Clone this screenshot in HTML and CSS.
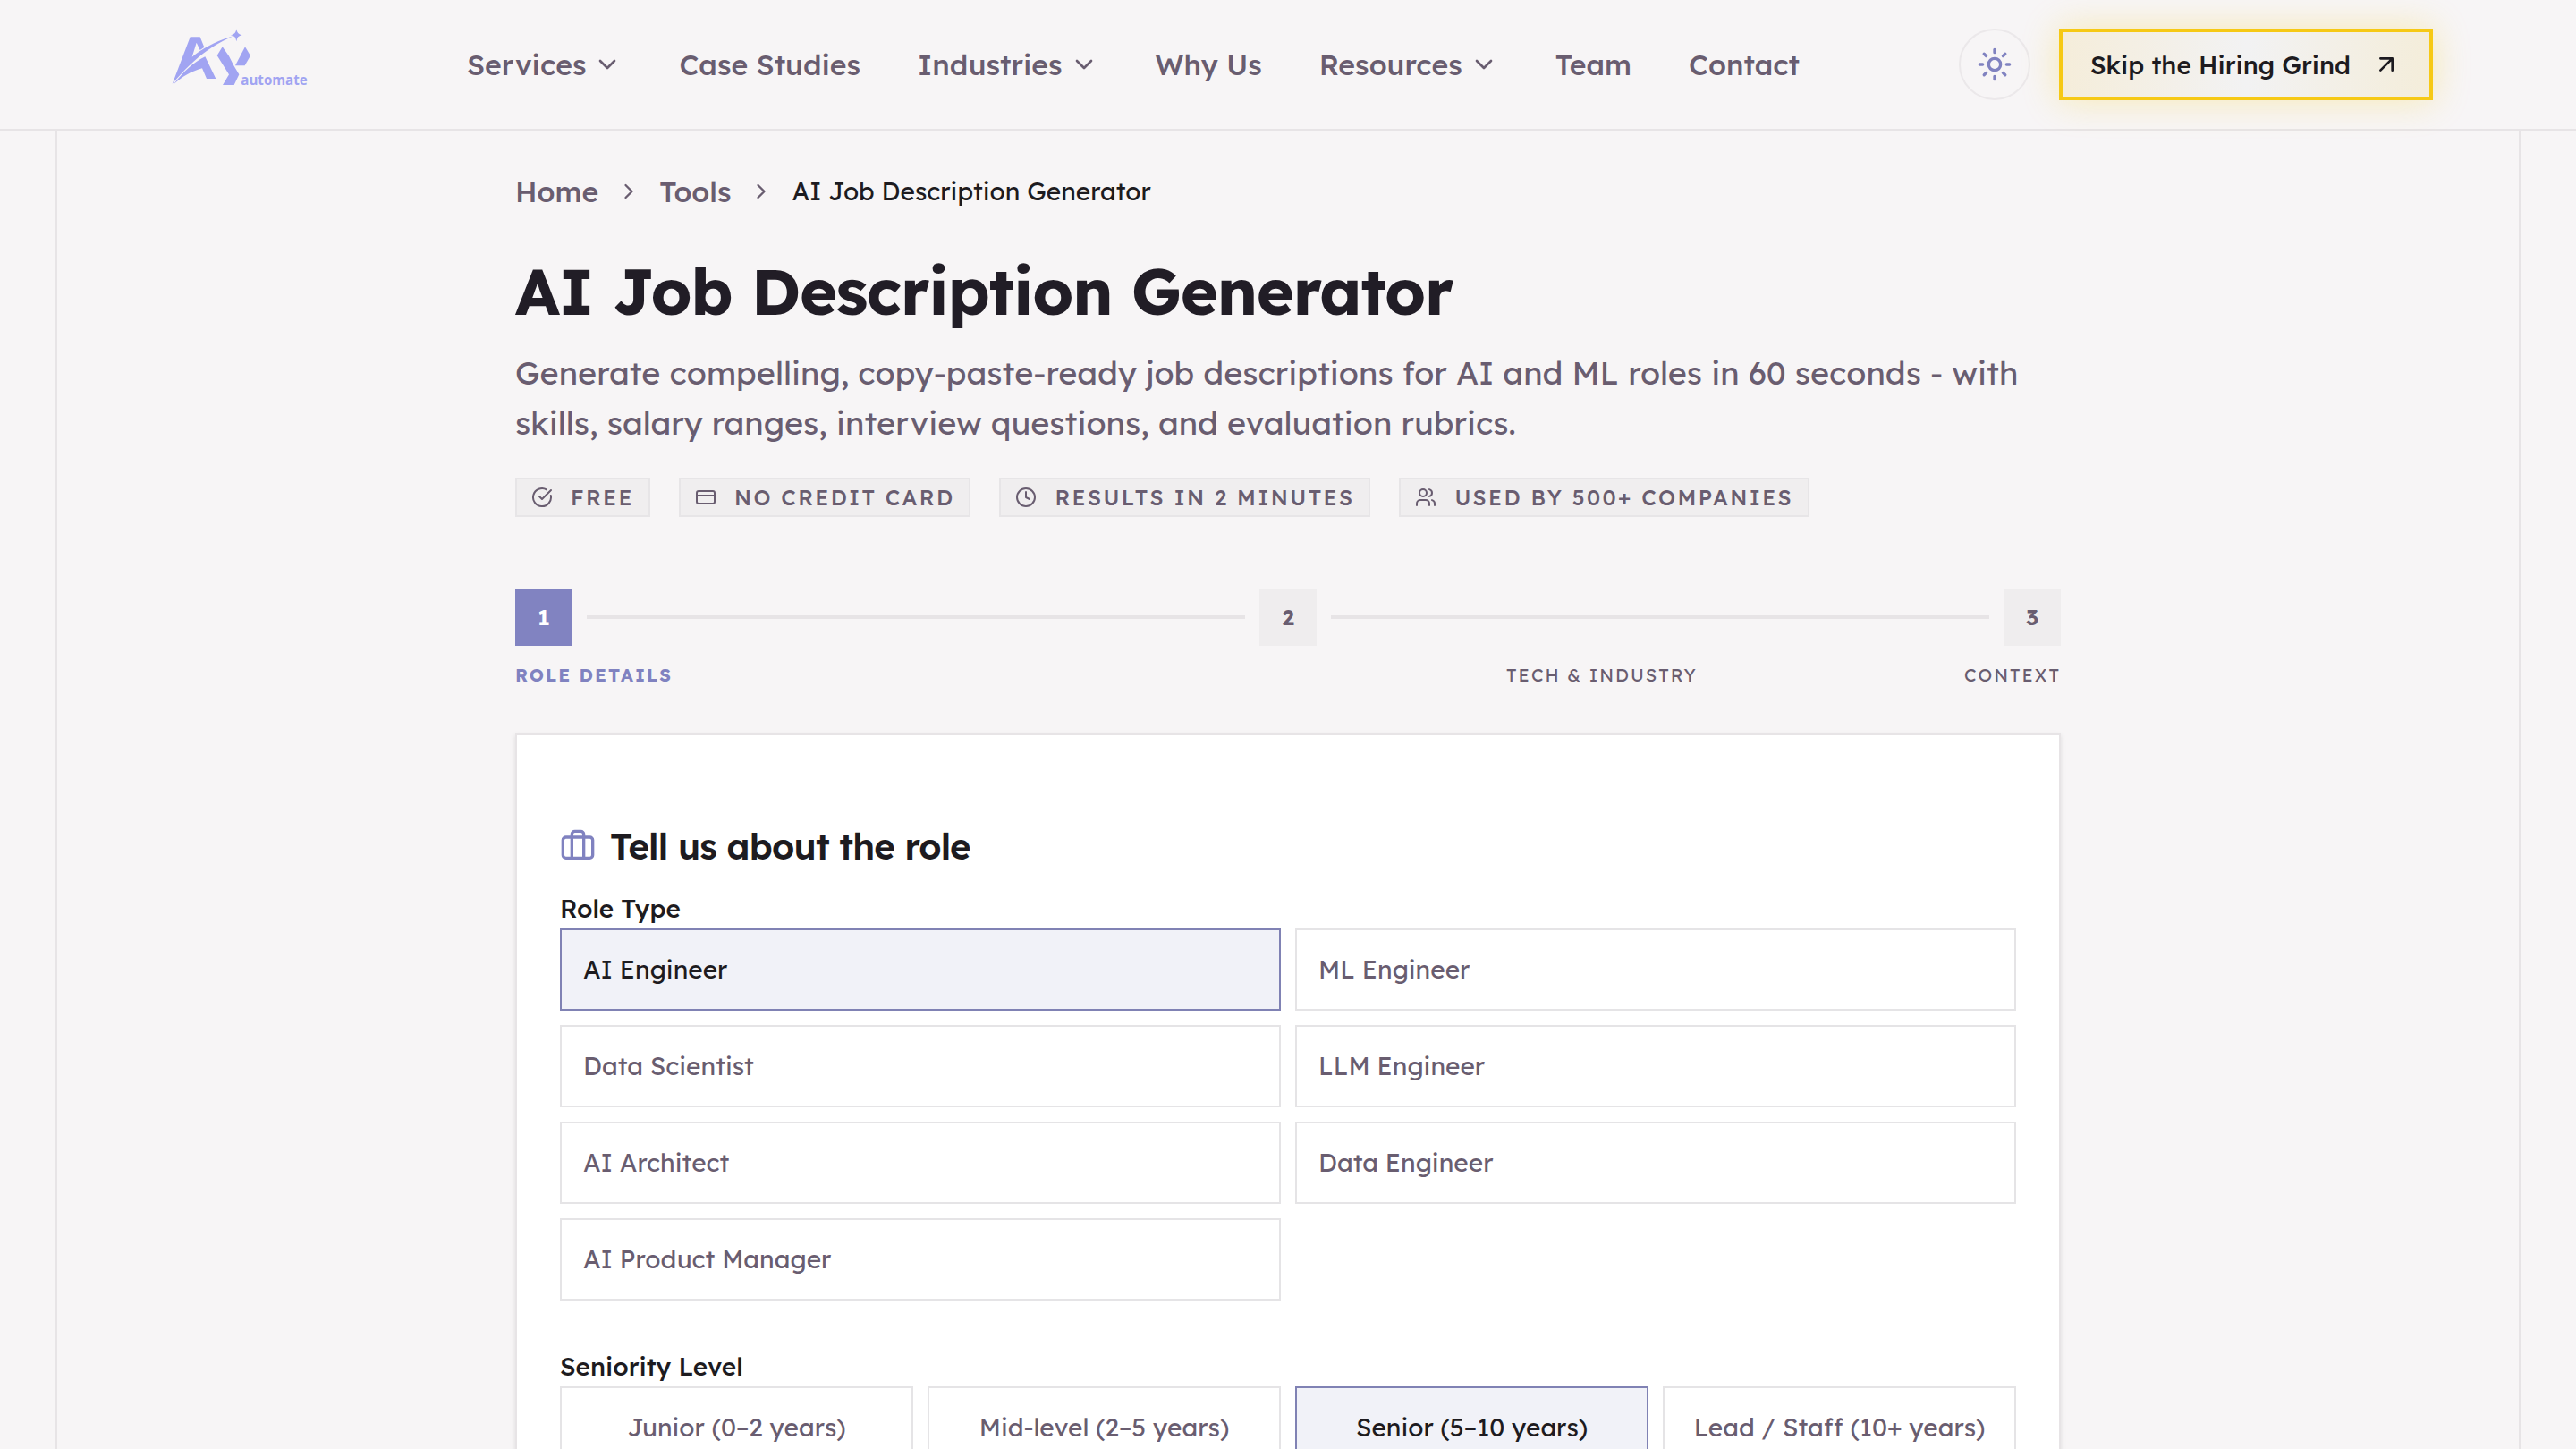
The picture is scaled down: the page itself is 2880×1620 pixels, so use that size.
FILE: index.html
```html
<!DOCTYPE html>
<html lang="en">
<head>
  <meta charset="UTF-8"/>
  <meta name="viewport" content="width=device-width,initial-scale=1.0"/>
  <title>AI Job Description Generator</title>
  <link rel="stylesheet" href="styles.css">
</head>
<body>
  <header class="header">
    <a class="logo" href="#" aria-label="AY automate">
      <svg viewBox="36 36 468 204" width="156" height="68">
        <path d="M98 64H131L145 98L131 108L119 83L104 131C142 101 188 76 243 61C188 84 137 118 95 160C76 178 55 202 38 221Z"/>
        <path d="M42 223C76 180 104 152 148 130L184 204H153L138 169C100 180 70 198 42 223Z"/>
        <path d="M206 97L228 128L244 160L262 190L245 225H207L228 190L188 126Z"/>
        <path d="M282 97L300 127L281 160H249Z"/>
        <path d="M253 37Q255 56 272 58Q255 60 253 79Q251 60 234 58Q251 56 253 37Z"/>
        <text x="268" y="225" textLength="223" lengthAdjust="spacingAndGlyphs">automate</text>
      </svg>
    </a>

    <nav class="nav">
      <a href="#">Services <svg class="icon" viewBox="0 0 24 24"><path d="m6 9 6 6 6-6"/></svg></a>
      <a href="#">Case Studies</a>
      <a href="#">Industries <svg class="icon" viewBox="0 0 24 24"><path d="m6 9 6 6 6-6"/></svg></a>
      <a href="#">Why Us</a>
      <a href="#">Resources <svg class="icon" viewBox="0 0 24 24"><path d="m6 9 6 6 6-6"/></svg></a>
      <a href="#">Team</a>
      <a href="#">Contact</a>
    </nav>

    <div class="actions">
      <button class="theme-btn" aria-label="Toggle theme">
        <svg class="icon" viewBox="0 0 24 24"><circle cx="12" cy="12" r="4"/><path d="M12 2v2M12 20v2M4.93 4.93l1.41 1.41M17.66 17.66l1.41 1.41M2 12h2M20 12h2M6.34 17.66l-1.41 1.41M19.07 4.93l-1.41 1.41"/></svg>
      </button>
      <a class="cta" href="#">
        Skip the Hiring Grind
        <svg class="icon" viewBox="0 0 24 24"><path d="M7 7h10v10M7 17 17 7"/></svg>
      </a>
    </div>
  </header>

  <div class="rails">
    <main class="container">
      <nav class="breadcrumb">
        <a href="#">Home</a>
        <svg class="icon" viewBox="0 0 24 24"><path d="m9 18 6-6-6-6"/></svg>
        <a href="#">Tools</a>
        <svg class="icon" viewBox="0 0 24 24"><path d="m9 18 6-6-6-6"/></svg>
        <span>AI Job Description Generator</span>
      </nav>

      <h1>AI Job Description Generator</h1>
      <p class="lead">Generate compelling, copy-paste-ready job descriptions for AI and ML roles in 60 seconds - with skills, salary ranges, interview questions, and evaluation rubrics.</p>

      <div class="badges">
        <span class="badge"><svg class="icon" viewBox="0 0 24 24"><path d="M21.8 10A10 10 0 1 1 17 3.34"/><path d="m9 11 3 3L22 4"/></svg>Free</span>
        <span class="badge"><svg class="icon" viewBox="0 0 24 24"><rect x="2" y="5" width="20" height="14" rx="2"/><path d="M2 10h20"/></svg>No credit card</span>
        <span class="badge"><svg class="icon" viewBox="0 0 24 24"><circle cx="12" cy="12" r="10"/><path d="M12 6v6l4 2"/></svg>Results in 2 minutes</span>
        <span class="badge"><svg class="icon" viewBox="0 0 24 24"><path d="M16 21v-2a4 4 0 0 0-4-4H6a4 4 0 0 0-4 4v2"/><circle cx="9" cy="7" r="4"/><path d="M22 21v-2a4 4 0 0 0-3-3.87M16 3.13a4 4 0 0 1 0 7.75"/></svg>Used by 500+ companies</span>
      </div>

      <div class="steps">
        <div class="step active">1</div>
        <div class="line"></div>
        <div class="step">2</div>
        <div class="line"></div>
        <div class="step">3</div>
      </div>
      <div class="step-labels">
        <span class="active">Role Details</span>
        <span>Tech &amp; Industry</span>
        <span>Context</span>
      </div>

      <section class="card">
        <h2><svg class="icon" viewBox="0 0 24 24"><path d="M16 20V4a2 2 0 0 0-2-2h-4a2 2 0 0 0-2 2v16"/><rect x="2" y="6" width="20" height="14" rx="2"/></svg>Tell us about the role</h2>

        <div class="label">Role Type</div>
        <div class="options roles">
          <button class="option selected">AI Engineer</button>
          <button class="option">ML Engineer</button>
          <button class="option">Data Scientist</button>
          <button class="option">LLM Engineer</button>
          <button class="option">AI Architect</button>
          <button class="option">Data Engineer</button>
          <button class="option">AI Product Manager</button>
        </div>

        <div class="label">Seniority Level</div>
        <div class="options levels">
          <button class="option">Junior (0–2 years)</button>
          <button class="option">Mid-level (2–5 years)</button>
          <button class="option selected">Senior (5–10 years)</button>
          <button class="option">Lead / Staff (10+ years)</button>
        </div>
      </section>
    </main>
  </div>
</body>
</html>
```
FILE: styles.css
```css
* { box-sizing: border-box; }
body {
  margin: 0;
  height: 1620px;
  overflow: hidden;
  display: flex;
  flex-direction: column;
  font-family: Lexend, Inter, sans-serif;
  font-size: 28px;
  background: #f7f5f6;
  color: #1d1b20;
}
a { color: inherit; text-decoration: none; }
button { font: inherit; color: inherit; }
.icon {
  flex: none;
  width: 32px;
  height: 32px;
  fill: none;
  stroke: currentColor;
  stroke-width: 2;
  stroke-linecap: round;
  stroke-linejoin: round;
}

/* header */
.header {
  flex: none;
  display: flex;
  align-items: center;
  height: 146px;
  padding: 0 160px 0 192px;
  border-bottom: 2px solid #e7e4e6;
}
.logo { margin-top: -12px; height: 68px; }
.logo svg { display: block; fill: #a1a4f2; }
.logo text {
  font-family: "Open Sans", sans-serif;
  font-size: 46px;
  font-weight: 700;
}
.nav {
  display: flex;
  gap: 64px;
  margin-left: 174px;
  font-size: 32px;
  font-weight: 500;
  color: #695d70;
}
.nav a { display: flex; align-items: center; gap: 8px; }
.actions {
  display: flex;
  align-items: center;
  gap: 32px;
  margin-left: auto;
}
.theme-btn {
  display: flex;
  align-items: center;
  justify-content: center;
  width: 80px;
  height: 80px;
  padding: 0;
  border: 2px solid #ebe8ea;
  border-radius: 50%;
  background: none;
  color: #8082c0;
}
.theme-btn .icon { width: 40px; height: 40px; }
.cta {
  display: flex;
  align-items: center;
  justify-content: space-between;
  width: 418px;
  height: 80px;
  padding: 0 32px 0 31px;
  border: 4px solid #f6c915;
  background: linear-gradient(90deg, #f5edda, #f2f2f3 50%, #f4edda);
  box-shadow: 0 0 40px rgba(250, 204, 21, 0.3);
  font-weight: 500;
}

/* page */
.rails {
  flex: 1;
  min-height: 0;
  width: 2756px;
  margin: 0 auto;
  border: solid #e7e4e6;
  border-width: 0 2px;
}
.container { width: 1728px; margin: 0 auto; padding-top: 44px; }
.breadcrumb {
  display: flex;
  align-items: center;
  gap: 20px;
  height: 48px;
}
.breadcrumb a { font-size: 32px; font-weight: 500; color: #695d70; }
.breadcrumb span { padding-bottom: 2px; }
.breadcrumb .icon { width: 28px; height: 28px; color: #695d70; }
h1 {
  margin: 47px 0 24px;
  font-size: 72px;
  line-height: 80px;
  font-weight: 700;
  letter-spacing: -0.02em;
  color: #211d26;
}
.lead {
  margin: 0;
  font-size: 36px;
  line-height: 56px;
  color: #695d70;
}
.badges { display: flex; gap: 32px; margin-top: 33px; }
.badge {
  display: flex;
  align-items: center;
  gap: 20px;
  height: 44px;
  padding: 0 16px 1px;
  border: 2px solid #e7e5e7;
  background: #f0eeef;
  font-size: 24px;
  font-weight: 500;
  letter-spacing: 0.1em;
  text-transform: uppercase;
  color: #695d70;
}
.badge .icon { width: 24px; height: 24px; }

/* progress */
.steps {
  display: flex;
  align-items: center;
  gap: 16px;
  margin-top: 80px;
}
.step {
  display: flex;
  align-items: center;
  justify-content: center;
  width: 64px;
  height: 64px;
  padding-bottom: 1px;
  background: #efedee;
  font-size: 24px;
  font-weight: 700;
  color: #695d70;
}
.step.active { background: #8183c1; color: #fff; }
.line { flex: 1; height: 4px; background: #e7e4e6; }
.step-labels {
  display: flex;
  margin-top: 17px;
  font-size: 20px;
  line-height: 32px;
  letter-spacing: 0.1em;
  text-transform: uppercase;
  color: #695d70;
}
.step-labels span { flex: 1; text-align: center; }
.step-labels span:first-child { text-align: left; }
.step-labels span:last-child { flex: none; }
.step-labels .active { font-weight: 700; color: #8082c0; }

/* form */
.card {
  height: 900px;
  margin-top: 49px;
  padding: 96px 48px 0;
  border: 2px solid #e7e4e6;
  background: #fff;
  box-shadow: 0 2px 6px rgba(0, 0, 0, 0.1);
}
h2 {
  display: flex;
  align-items: center;
  gap: 16px;
  margin: 0 0 20px;
  font-size: 40px;
  line-height: 56px;
  font-weight: 600;
  letter-spacing: -0.02em;
}
h2 .icon { width: 40px; height: 40px; color: #8082c0; }
.label { height: 44px; line-height: 44px; font-weight: 500; }
.options { display: grid; gap: 16px; }
.roles { grid-template-columns: 1fr 1fr; margin-bottom: 52px; }
.levels { grid-template-columns: repeat(4, 1fr); text-align: center; }
.option {
  height: 92px;
  padding: 0 24px 2px;
  border: 2px solid #e5e4e6;
  background: #fff;
  color: #695d70;
}
.roles .option { text-align: left; }
.option.selected {
  border-color: #8082b4;
  background: #f1f2f8;
  color: #1d1b20;
}
```
